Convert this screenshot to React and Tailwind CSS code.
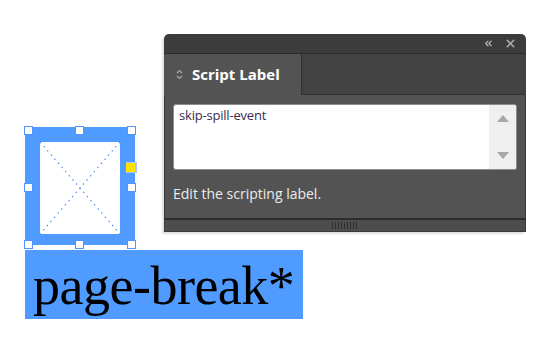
import { ChevronsLeft, X } from "lucide-react"

function Handle({ className }) {
  return <div className={"absolute w-[9px] h-[9px] bg-white border border-[#4f95ff] " + className} />
}

function FrameObject() {
  return (
    <div className="absolute left-[25px] top-[127px]">
      <div className="w-[110px] h-[118px] bg-[#4f9bff] pl-[15px] pt-[15px]">
        <div className="w-[80px] h-[92px] bg-white">
          <svg width="80" height="92" viewBox="0 0 80 92">
            <line x1="0" y1="0" x2="80" y2="92" stroke="#4f8fff" strokeWidth="1.2" strokeDasharray="1.5 4" />
            <line x1="80" y1="0" x2="0" y2="92" stroke="#4f8fff" strokeWidth="1.2" strokeDasharray="1.5 4" />
          </svg>
        </div>
      </div>
      <Handle className="left-[-1px] top-[-1px]" />
      <Handle className="left-[50px] top-[-1px]" />
      <Handle className="left-[102px] top-[-1px]" />
      <Handle className="left-[-1px] top-[56px]" />
      <Handle className="left-[102px] top-[56px]" />
      <Handle className="left-[-1px] top-[113px]" />
      <Handle className="left-[50px] top-[113px]" />
      <Handle className="left-[102px] top-[113px]" />
      <div className="absolute left-[101px] top-[36px] w-[9px] h-[9px] bg-[#ffe100] shadow-[1px_0_0_1px_#a9c8ff]" />
    </div>
  )
}

function ScriptPanel() {
  return (
    <div className="absolute left-[164px] top-[34px] w-[362px] h-[198px] flex flex-col rounded-t-[5px] overflow-hidden shadow-[-2px_2px_2px_rgba(0,0,0,0.12)] font-['Open_Sans',sans-serif]">
      <div className="h-[20px] bg-[#3c3c3c] flex items-center justify-end gap-[10px] pr-[9px] border-b border-[#2b2b2b]">
        <ChevronsLeft size={11} strokeWidth={2.5} className="text-[#bdbdbd]" />
        <X size={13} strokeWidth={3} className="text-[#a9a9a9]" />
      </div>
      <div className="h-[41px] flex bg-[#424242]">
        <div className="w-[137px] bg-[#535353] flex items-center pl-[12px] gap-[9px]">
          <svg width="7" height="11" viewBox="0 0 7 11">
            <path d="M1 4 L3.5 1.5 L6 4 M1 7 L3.5 9.5 L6 7" fill="none" stroke="#a8a8a8" strokeWidth="1.2" />
          </svg>
          <span className="text-[15px] font-bold text-white">Script Label</span>
        </div>
        <div className="flex-1 border-l border-b border-[#323232]" />
      </div>
      <div className="flex-1 bg-[#535353] border-x border-[#3a3a3a] px-[8px] pt-[9px]">
        <div className="h-[66px] bg-white border border-[#8c8c8c] rounded-[3px] flex overflow-hidden">
          <div className="flex-1 pl-[5px] pt-[1px] text-[13px] text-[#3a2d4d] leading-[18px] tracking-[-0.2px]">skip-spill-event</div>
          <div className="w-[27px] bg-[#efefef] flex flex-col items-center justify-between py-[10px]">
            <svg width="12" height="7" viewBox="0 0 12 7"><path d="M0 7 L6 0 L12 7 Z" fill="#a8a8a8" /></svg>
            <svg width="12" height="7" viewBox="0 0 12 7"><path d="M0 0 L6 7 L12 0 Z" fill="#a8a8a8" /></svg>
          </div>
        </div>
        <div className="mt-[15px] text-[14px] text-[#ececec] leading-[18px]">Edit the scripting label.</div>
      </div>
      <div className="h-[2px] bg-[#2e2e2e]" />
      <div className="h-[12px] bg-[#4d4d4d] border-x border-b border-[#3a3a3a] flex justify-center items-center gap-[2px] pr-[2px]">
        {[0, 1, 2, 3, 4, 5, 6, 7, 8].map((i) => (
          <div key={i} className="w-[1px] h-[7px] bg-[#2f2f2f]" />
        ))}
      </div>
    </div>
  )
}

function App() {
  return (
    <div className="relative w-[546px] h-[350px] bg-white overflow-hidden">
      <FrameObject />
      <div className="absolute left-[25px] top-[250px] w-[278px] h-[69px] bg-[#4f9bff] pl-[8px] pt-[9px]">
        <div className="text-[54px] leading-none tracking-[-0.5px] text-black font-['Liberation_Serif',serif]">page-break*</div>
      </div>
      <ScriptPanel />
    </div>
  )
}

export default App
